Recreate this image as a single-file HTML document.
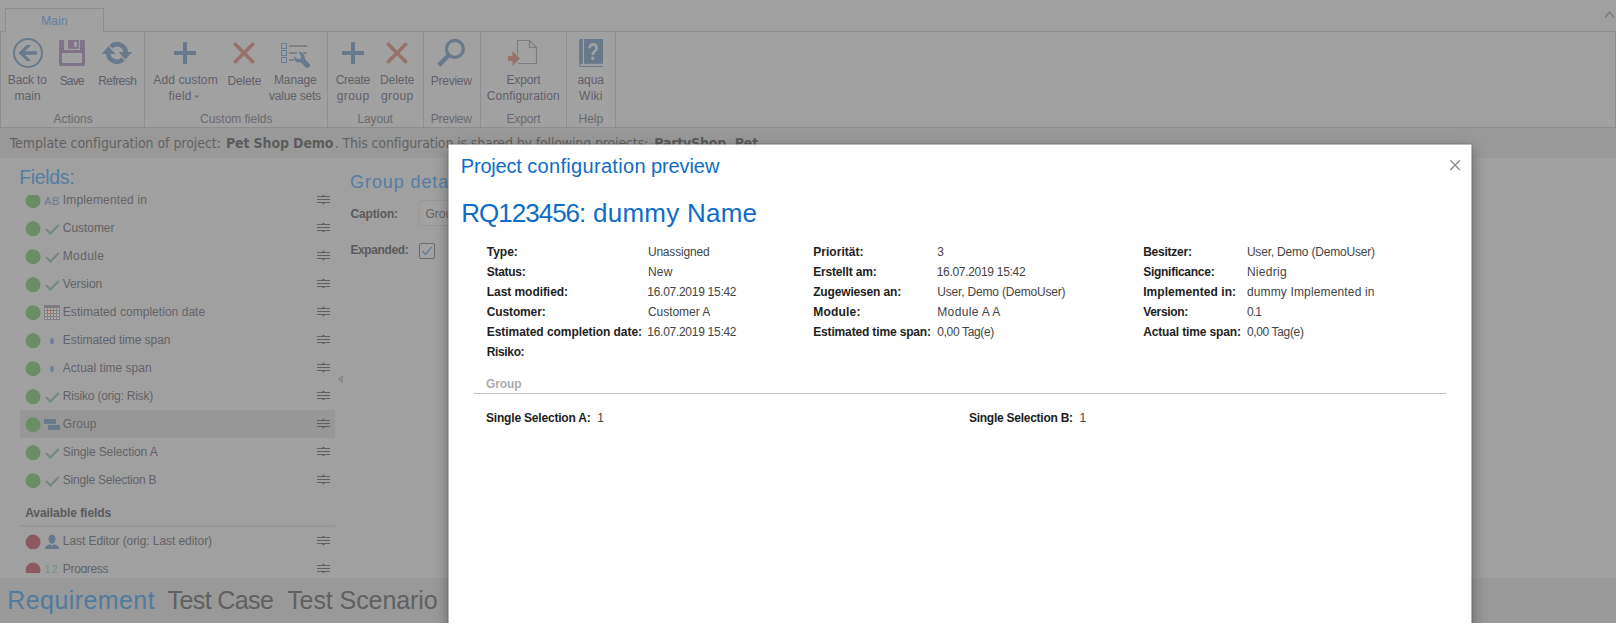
<!DOCTYPE html>
<html lang="en">
<head>
<meta charset="utf-8">
<title>Project configuration preview</title>
<style>
*{box-sizing:border-box;margin:0;padding:0}
html,body{width:1616px;height:623px;overflow:hidden;background:#a0a0a0;font-family:"Liberation Sans",sans-serif;font-size:12px;color:#5e5e62}
#page{position:relative;width:1616px;height:623px;overflow:hidden;background:#a0a0a0}
.a{position:absolute}
.t{position:absolute;white-space:pre}
#ribbon{left:0;top:31px;width:1616px;height:97px;border:1px solid #8d8d8d;background:#a1a1a1}
#tab{left:5px;top:8px;width:99px;height:24px;border:1px solid #8d8d8d;border-bottom:none;background:#a1a1a1}
.sep{top:32px;width:1px;height:95px;background:#8f8f8f}
#info{left:0;top:128px;width:1616px;height:30px;background:#999}
#sel{left:20px;top:410px;width:315px;height:28px;background:#979797}
#avline{left:20px;top:525px;width:315px;height:2px;background:#979797}
#bottom{left:0;top:578px;width:1616px;height:45px;background:#999}
#modal{left:448px;top:144px;width:1023px;height:520px;background:#fff;box-shadow:0 0 0 1px rgba(0,0,0,.15),0 5px 15px rgba(0,0,0,.4);transform:translate(.5px,.5px)}
#gline{left:474px;top:393px;width:972px;height:1px;background:#c3c3c3}
</style>
</head>
<body>
<div id="page">
<div id="ribbon" class="a"></div>
<div id="tab" class="a"></div>
<div class="a sep" style="left:144px"></div>
<div class="a sep" style="left:327px"></div>
<div class="a sep" style="left:423px"></div>
<div class="a sep" style="left:480px"></div>
<div class="a sep" style="left:566px"></div>
<div class="a sep" style="left:615px"></div>
<div id="info" class="a"></div>
<div id="sel" class="a"></div>
<div id="avline" class="a"></div>
<div id="bottom" class="a"></div>
<svg class="a" style="left:0;top:30px" width="640" height="98" viewBox="0 30 640 98" fill="none">
 <!-- back -->
 <circle cx="28" cy="53" r="14" stroke="#69798c" stroke-width="2"/>
 <path d="M18.400 53 L26.800 45 L31.400 45 L25 51.200 L37 51.200 L37 54.800 L25 54.800 L31.400 61 L26.800 61 Z" fill="#69798c"/>
 <!-- save -->
 <path d="M59 41.500 Q59 40 60.500 40 L64.100 40 L64.100 49.900 L79.900 49.900 L79.900 40 L83.500 40 Q85 40 85 41.500 L85 64.500 Q85 66 83.500 66 L60.500 66 Q59 66 59 64.500 Z M62 53 L62 63 L82 63 L82 53 Z" fill="#807289" fill-rule="evenodd"/>
 <path d="M68.100 40 H78.800 V48.800 H68.100 Z M74 42.100 V46.800 H76.900 V42.100 Z" fill="#807289" fill-rule="evenodd"/>
 <!-- refresh -->
 <path d="M110.800 46.800 A8.750 8.750 0 0 1 125.750 53" stroke="#69798c" stroke-width="4.500"/>
 <path d="M123.200 59.200 A8.750 8.750 0 0 1 108.250 53" stroke="#69798c" stroke-width="4.500"/>
 <path d="M101.700 54 L115.400 54 L108.500 46.300 Z" fill="#69798c"/>
 <path d="M118.600 52 L132.300 52 L125.400 59.500 Z" fill="#69798c"/>
 <!-- plus -->
 <path d="M183 42 H187 V51 H196 V55 H187 V64 H183 V55 H174 V51 H183 Z" fill="#69798c"/>
 <!-- delete x -->
 <path d="M234.300 43.300 L253.700 62.700 M253.700 43.300 L234.300 62.700" stroke="#96726a" stroke-width="3.600"/>
 <!-- manage -->
 <g stroke="#687d97" stroke-width="1">
 <rect x="281.500" y="43.500" width="5" height="5"/><rect x="281.500" y="50.500" width="5" height="5"/><rect x="281.500" y="57.500" width="5" height="5"/>
 </g>
 <path d="M289 46 H307 M289 53 H296.800 M303.300 53 H307 M289 60 H293.900" stroke="#818181" stroke-width="2"/>
 <path d="M298.100 52.100 L301.600 52.300 Q303.800 54 304.400 55.500 L304.900 59 L310.100 64.500 Q310.500 65.600 309.800 66.400 L307.700 67.900 Q306.500 68.200 305.700 67.500 L300.800 62.300 L297.800 62.600 Q296 62.200 295.100 60.900 Q293.900 58.500 294 56 L297 58.700 L300 59 L301.400 56.700 L300 54.400 Z" fill="#69798c"/>
 <!-- plus 2 -->
 <path d="M351 42 H355 V51 H364 V55 H355 V64 H351 V55 H342 V51 H351 Z" fill="#69798c"/>
 <path d="M387.300 43.300 L406.700 62.700 M406.700 43.300 L387.300 62.700" stroke="#96726a" stroke-width="3.600"/>
 <!-- preview -->
 <circle cx="454.900" cy="48.900" r="8.450" stroke="#69798c" stroke-width="3.200"/>
 <path d="M449.200 54.600 L438.800 65.300" stroke="#69798c" stroke-width="4.400"/>
 <!-- export -->
 <path d="M517.500 54 V40.500 H529.500 L536.500 47.500 V63.500 H517.500" stroke="#7c7c7c" stroke-width="1.200"/>
 <path d="M529.500 40.500 V47.500 H536.500" stroke="#7c7c7c" stroke-width="1.200"/>
 <path d="M508 56 H512.500 V51 L520 58.500 L512.500 66 V61 H508 Z" fill="#96726a"/>
 <!-- book -->
 <path d="M584.100 39 H603 V63.800 H584.100 Z" fill="#69798c"/>
 <path d="M579.100 40 L580 39 H582.800 V63.800 H580.300 V65.900 H603 V67 H580.200 L579.100 66 Z" fill="#69798c"/>
</svg>
<span class="t" style="left:586.400px;top:39px;width:14px;text-align:center;font-weight:bold;font-size:23px;line-height:26px;color:#a1a1a1;transform:scaleX(.82)">?</span>
<svg class="a" style="left:194px;top:95px" width="6" height="4" viewBox="0 0 6 4"><path d="M0.300 0.500 H5.300 L2.800 3.300 Z" fill="#777"/></svg>
<svg class="a" style="left:1600px;top:6px" width="16" height="16" viewBox="1600 6 16 16"><path d="M1604.900 18.600 V15.900 L1609.500 10.900 L1614.100 15.900 V18.600 L1609.500 13.700 Z" fill="#808080"/></svg>

<svg class="a" style="left:24px;top:191px" width="18" height="18" viewBox="0 0 18 18"><circle cx="9.100" cy="9.7" r="7.450" fill="#6b8c67"/></svg>
<svg class="a" style="left:24px;top:219px" width="18" height="18" viewBox="0 0 18 18"><circle cx="9.100" cy="9.7" r="7.450" fill="#6b8c67"/></svg>
<svg class="a" style="left:24px;top:247px" width="18" height="18" viewBox="0 0 18 18"><circle cx="9.100" cy="9.7" r="7.450" fill="#6b8c67"/></svg>
<svg class="a" style="left:24px;top:275px" width="18" height="18" viewBox="0 0 18 18"><circle cx="9.100" cy="9.7" r="7.450" fill="#6b8c67"/></svg>
<svg class="a" style="left:24px;top:303px" width="18" height="18" viewBox="0 0 18 18"><circle cx="9.100" cy="9.7" r="7.450" fill="#6b8c67"/></svg>
<svg class="a" style="left:24px;top:331px" width="18" height="18" viewBox="0 0 18 18"><circle cx="9.100" cy="9.7" r="7.450" fill="#6b8c67"/></svg>
<svg class="a" style="left:24px;top:359px" width="18" height="18" viewBox="0 0 18 18"><circle cx="9.100" cy="9.7" r="7.450" fill="#6b8c67"/></svg>
<svg class="a" style="left:24px;top:387px" width="18" height="18" viewBox="0 0 18 18"><circle cx="9.100" cy="9.7" r="7.450" fill="#6b8c67"/></svg>
<svg class="a" style="left:24px;top:415px" width="18" height="18" viewBox="0 0 18 18"><circle cx="9.100" cy="9.7" r="7.450" fill="#6b8c67"/></svg>
<svg class="a" style="left:24px;top:443px" width="18" height="18" viewBox="0 0 18 18"><circle cx="9.100" cy="9.7" r="7.450" fill="#6b8c67"/></svg>
<svg class="a" style="left:24px;top:471px" width="18" height="18" viewBox="0 0 18 18"><circle cx="9.100" cy="9.7" r="7.450" fill="#6b8c67"/></svg>
<svg class="a" style="left:24px;top:532px" width="18" height="18" viewBox="0 0 18 18"><circle cx="9.100" cy="9.9" r="7.450" fill="#8d5961"/></svg>
<svg class="a" style="left:24px;top:560px" width="18" height="18" viewBox="0 0 18 18"><circle cx="9.100" cy="9.9" r="7.450" fill="#8d5961"/></svg>
<svg class="a" style="left:317px;top:193px" width="13" height="13" viewBox="0 0 13 13" fill="none"><path d="M0 3.500 H13 M0 6.500 H13 M0 9.500 H13" stroke="#606060" stroke-width="1"/><path d="M5 3 L6.500 1.500 L8 3 Z M5 10 L6.500 11.500 L8 10 Z" fill="#606060"/></svg>
<svg class="a" style="left:317px;top:221px" width="13" height="13" viewBox="0 0 13 13" fill="none"><path d="M0 3.500 H13 M0 6.500 H13 M0 9.500 H13" stroke="#606060" stroke-width="1"/><path d="M5 3 L6.500 1.500 L8 3 Z M5 10 L6.500 11.500 L8 10 Z" fill="#606060"/></svg>
<svg class="a" style="left:317px;top:249px" width="13" height="13" viewBox="0 0 13 13" fill="none"><path d="M0 3.500 H13 M0 6.500 H13 M0 9.500 H13" stroke="#606060" stroke-width="1"/><path d="M5 3 L6.500 1.500 L8 3 Z M5 10 L6.500 11.500 L8 10 Z" fill="#606060"/></svg>
<svg class="a" style="left:317px;top:277px" width="13" height="13" viewBox="0 0 13 13" fill="none"><path d="M0 3.500 H13 M0 6.500 H13 M0 9.500 H13" stroke="#606060" stroke-width="1"/><path d="M5 3 L6.500 1.500 L8 3 Z M5 10 L6.500 11.500 L8 10 Z" fill="#606060"/></svg>
<svg class="a" style="left:317px;top:305px" width="13" height="13" viewBox="0 0 13 13" fill="none"><path d="M0 3.500 H13 M0 6.500 H13 M0 9.500 H13" stroke="#606060" stroke-width="1"/><path d="M5 3 L6.500 1.500 L8 3 Z M5 10 L6.500 11.500 L8 10 Z" fill="#606060"/></svg>
<svg class="a" style="left:317px;top:333px" width="13" height="13" viewBox="0 0 13 13" fill="none"><path d="M0 3.500 H13 M0 6.500 H13 M0 9.500 H13" stroke="#606060" stroke-width="1"/><path d="M5 3 L6.500 1.500 L8 3 Z M5 10 L6.500 11.500 L8 10 Z" fill="#606060"/></svg>
<svg class="a" style="left:317px;top:361px" width="13" height="13" viewBox="0 0 13 13" fill="none"><path d="M0 3.500 H13 M0 6.500 H13 M0 9.500 H13" stroke="#606060" stroke-width="1"/><path d="M5 3 L6.500 1.500 L8 3 Z M5 10 L6.500 11.500 L8 10 Z" fill="#606060"/></svg>
<svg class="a" style="left:317px;top:389px" width="13" height="13" viewBox="0 0 13 13" fill="none"><path d="M0 3.500 H13 M0 6.500 H13 M0 9.500 H13" stroke="#606060" stroke-width="1"/><path d="M5 3 L6.500 1.500 L8 3 Z M5 10 L6.500 11.500 L8 10 Z" fill="#606060"/></svg>
<svg class="a" style="left:317px;top:417px" width="13" height="13" viewBox="0 0 13 13" fill="none"><path d="M0 3.500 H13 M0 6.500 H13 M0 9.500 H13" stroke="#606060" stroke-width="1"/><path d="M5 3 L6.500 1.500 L8 3 Z M5 10 L6.500 11.500 L8 10 Z" fill="#606060"/></svg>
<svg class="a" style="left:317px;top:445px" width="13" height="13" viewBox="0 0 13 13" fill="none"><path d="M0 3.500 H13 M0 6.500 H13 M0 9.500 H13" stroke="#606060" stroke-width="1"/><path d="M5 3 L6.500 1.500 L8 3 Z M5 10 L6.500 11.500 L8 10 Z" fill="#606060"/></svg>
<svg class="a" style="left:317px;top:473px" width="13" height="13" viewBox="0 0 13 13" fill="none"><path d="M0 3.500 H13 M0 6.500 H13 M0 9.500 H13" stroke="#606060" stroke-width="1"/><path d="M5 3 L6.500 1.500 L8 3 Z M5 10 L6.500 11.500 L8 10 Z" fill="#606060"/></svg>
<svg class="a" style="left:317px;top:534px" width="13" height="13" viewBox="0 0 13 13" fill="none"><path d="M0 3.500 H13 M0 6.500 H13 M0 9.500 H13" stroke="#606060" stroke-width="1"/><path d="M5 3 L6.500 1.500 L8 3 Z M5 10 L6.500 11.500 L8 10 Z" fill="#606060"/></svg>
<svg class="a" style="left:317px;top:562px" width="13" height="13" viewBox="0 0 13 13" fill="none"><path d="M0 3.500 H13 M0 6.500 H13 M0 9.500 H13" stroke="#606060" stroke-width="1"/><path d="M5 3 L6.500 1.500 L8 3 Z M5 10 L6.500 11.500 L8 10 Z" fill="#606060"/></svg>
<svg class="a" style="left:45px;top:222px" width="16" height="14" viewBox="0 0 16 14" fill="none"><path d="M1.300 7.200 L5.400 11.600 L13.700 3" stroke="#738a82" stroke-width="2.200"/></svg>
<svg class="a" style="left:45px;top:250px" width="16" height="14" viewBox="0 0 16 14" fill="none"><path d="M1.300 7.200 L5.400 11.600 L13.700 3" stroke="#738a82" stroke-width="2.200"/></svg>
<svg class="a" style="left:45px;top:278px" width="16" height="14" viewBox="0 0 16 14" fill="none"><path d="M1.300 7.200 L5.400 11.600 L13.700 3" stroke="#738a82" stroke-width="2.200"/></svg>
<svg class="a" style="left:45px;top:390px" width="16" height="14" viewBox="0 0 16 14" fill="none"><path d="M1.300 7.200 L5.400 11.600 L13.700 3" stroke="#738a82" stroke-width="2.200"/></svg>
<svg class="a" style="left:45px;top:446px" width="16" height="14" viewBox="0 0 16 14" fill="none"><path d="M1.300 7.200 L5.400 11.600 L13.700 3" stroke="#738a82" stroke-width="2.200"/></svg>
<svg class="a" style="left:45px;top:474px" width="16" height="14" viewBox="0 0 16 14" fill="none"><path d="M1.300 7.200 L5.400 11.600 L13.700 3" stroke="#738a82" stroke-width="2.200"/></svg>
<svg class="a" style="left:44px;top:304px" width="16" height="16" viewBox="0 0 16 16"><rect x="0" y="1" width="16" height="15" fill="#828282"/><rect x="0.500" y="1.500" width="15" height="2" fill="#7a7a7a"/><g fill="#acacac"><rect x="1" y="4" width="2" height="2"/><rect x="4" y="4" width="2" height="2"/><rect x="7" y="4" width="2" height="2"/><rect x="10" y="4" width="2" height="2"/><rect x="13" y="4" width="2" height="2"/><rect x="1" y="7" width="2" height="2"/><rect x="4" y="7" width="2" height="2"/><rect x="7" y="7" width="2" height="2"/><rect x="10" y="7" width="2" height="2"/><rect x="13" y="7" width="2" height="2"/><rect x="1" y="10" width="2" height="2"/><rect x="4" y="10" width="2" height="2"/><rect x="7" y="10" width="2" height="2"/><rect x="10" y="10" width="2" height="2"/><rect x="13" y="10" width="2" height="2"/><rect x="1" y="13" width="2" height="2"/><rect x="4" y="13" width="2" height="2"/><rect x="7" y="13" width="2" height="2"/><rect x="10" y="13" width="2" height="2"/><rect x="13" y="13" width="2" height="2"/></g><rect x="3" y="6" width="4" height="4" fill="#a5675a"/><rect x="4" y="7" width="2" height="2" fill="#b4bec3"/></svg>
<svg class="a" style="left:48px;top:336px" width="8" height="10" viewBox="0 0 8 10"><ellipse cx="4" cy="5" rx="1.900" ry="3.100" fill="#6b7f9c"/></svg>
<svg class="a" style="left:48px;top:364px" width="8" height="10" viewBox="0 0 8 10"><ellipse cx="4" cy="5" rx="1.900" ry="3.100" fill="#6b7f9c"/></svg>
<svg class="a" style="left:44px;top:418px" width="17" height="13" viewBox="0 0 17 13"><rect x="0" y="1" width="12" height="4.900" fill="#69798c"/><rect x="4.100" y="7" width="12" height="4.900" fill="#69798c"/></svg>
<svg class="a" style="left:44px;top:534px" width="16" height="16" viewBox="0 0 16 16"><path d="M8 0.800 C10 0.800 11.300 2.200 11.300 4.300 C11.300 4.800 11.900 4.800 11.700 5.600 C11.600 6.300 11.200 6.300 11.100 6.700 C10.700 8.400 9.500 9.800 8 9.800 C6.500 9.800 5.300 8.400 4.900 6.700 C4.800 6.300 4.400 6.300 4.300 5.600 C4.100 4.800 4.700 4.800 4.700 4.300 C4.700 2.200 6 0.800 8 0.800 Z" fill="#67788c"/><path d="M1 14.900 C1 12 2.800 11.200 5.700 10.200 L8 11.700 L10.300 10.200 C13.200 11.200 15 12 15 14.900 Z" fill="#67788c"/></svg>
<svg class="a" style="left:337px;top:374px" width="7" height="11" viewBox="0 0 7 11"><path d="M6 0.800 V9.800 L0.600 5.300 Z" fill="#8a8a8a"/></svg>
<div class="a" style="left:419px;top:200px;width:60px;height:26px;border:1px solid #989898;border-radius:4px;background:#a2a2a2"></div>
<div class="a" style="left:419px;top:243px;width:16px;height:16px;border:1px solid #6a6a6a;border-radius:2px;background:#a2a2a2"></div>
<svg class="a" style="left:419px;top:243px" width="16" height="16" viewBox="0 0 16 16" fill="none"><path d="M3.500 8.300 L6.600 11.600 L12.700 3.800" stroke="#5f7a9a" stroke-width="1.300"/></svg>

<span class="t" style="left:41.2px;top:12.8px;font-size:12px;line-height:16px;color:#5c7fa3;letter-spacing:0.16px;">Main</span>
<span class="t" style="left:7.8px;top:71.8px;font-size:12px;line-height:16px;color:#615f69;letter-spacing:-0.14px;">Back to</span>
<span class="t" style="left:14.4px;top:87.8px;font-size:12px;line-height:16px;color:#615f69;letter-spacing:0.06px;">main</span>
<span class="t" style="left:59.7px;top:72.8px;font-size:12px;line-height:16px;color:#615f69;letter-spacing:-0.85px;">Save</span>
<span class="t" style="left:98.2px;top:72.8px;font-size:12px;line-height:16px;color:#615f69;letter-spacing:-0.56px;">Refresh</span>
<span class="t" style="left:153.3px;top:71.8px;font-size:12px;line-height:16px;color:#615f69;letter-spacing:0.11px;">Add custom</span>
<span class="t" style="left:168.5px;top:87.8px;font-size:12px;line-height:16px;color:#615f69;letter-spacing:0.25px;">field</span>
<span class="t" style="left:227.4px;top:72.8px;font-size:12px;line-height:16px;color:#615f69;letter-spacing:-0.14px;">Delete</span>
<span class="t" style="left:274.0px;top:71.8px;font-size:12px;line-height:16px;color:#615f69;letter-spacing:-0.13px;">Manage</span>
<span class="t" style="left:269.1px;top:87.8px;font-size:12px;line-height:16px;color:#615f69;letter-spacing:-0.23px;">value sets</span>
<span class="t" style="left:335.8px;top:71.8px;font-size:12px;line-height:16px;color:#615f69;letter-spacing:-0.35px;">Create</span>
<span class="t" style="left:336.8px;top:87.8px;font-size:12px;line-height:16px;color:#615f69;letter-spacing:0.40px;">group</span>
<span class="t" style="left:380.0px;top:71.8px;font-size:12px;line-height:16px;color:#615f69;letter-spacing:-0.06px;">Delete</span>
<span class="t" style="left:381.0px;top:87.8px;font-size:12px;line-height:16px;color:#615f69;letter-spacing:0.40px;">group</span>
<span class="t" style="left:430.8px;top:72.8px;font-size:12px;line-height:16px;color:#615f69;letter-spacing:-0.26px;">Preview</span>
<span class="t" style="left:506.5px;top:71.8px;font-size:12px;line-height:16px;color:#615f69;letter-spacing:-0.14px;">Export</span>
<span class="t" style="left:486.8px;top:87.8px;font-size:12px;line-height:16px;color:#615f69;letter-spacing:0.13px;">Configuration</span>
<span class="t" style="left:577.5px;top:71.8px;font-size:12px;line-height:16px;color:#615f69;letter-spacing:-0.10px;">aqua</span>
<span class="t" style="left:579.1px;top:87.8px;font-size:12px;line-height:16px;color:#615f69;letter-spacing:0.24px;">Wiki</span>
<span class="t" style="left:53.6px;top:110.8px;font-size:12px;line-height:16px;color:#69696f;letter-spacing:-0.03px;">Actions</span>
<span class="t" style="left:200.1px;top:110.8px;font-size:12px;line-height:16px;color:#69696f;letter-spacing:-0.03px;">Custom fields</span>
<span class="t" style="left:357.5px;top:110.8px;font-size:12px;line-height:16px;color:#69696f;letter-spacing:-0.13px;">Layout</span>
<span class="t" style="left:430.8px;top:110.8px;font-size:12px;line-height:16px;color:#69696f;letter-spacing:-0.26px;">Preview</span>
<span class="t" style="left:506.5px;top:110.8px;font-size:12px;line-height:16px;color:#69696f;letter-spacing:-0.14px;">Export</span>
<span class="t" style="left:578.5px;top:110.8px;font-size:12px;line-height:16px;color:#69696f;letter-spacing:-0.03px;">Help</span>
<span class="t" style="left:9.8px;top:134.2px;font-size:14px;line-height:18px;color:#626262;font-family:'DejaVu Sans Condensed','DejaVu Sans','Liberation Sans',sans-serif;letter-spacing:-0.05px;">Template configuration of project:</span>
<span class="t" style="left:225.9px;top:134.2px;font-size:14px;line-height:18px;color:#5c5c5c;font-weight:700;font-family:'DejaVu Sans Condensed','DejaVu Sans','Liberation Sans',sans-serif;letter-spacing:-0.12px;">Pet Shop Demo</span>
<span class="t" style="left:334.8px;top:134.2px;font-size:14px;line-height:18px;color:#626262;font-family:'DejaVu Sans Condensed','DejaVu Sans','Liberation Sans',sans-serif;letter-spacing:-0.14px;">. This configuration is shared by following projects:</span>
<span class="t" style="left:654.3px;top:134.2px;font-size:14px;line-height:18px;color:#5c5c5c;font-weight:700;font-family:'DejaVu Sans Condensed','DejaVu Sans','Liberation Sans',sans-serif;letter-spacing:-0.20px;">PartyShop, Pet</span>
<span class="t" style="left:350.1px;top:170.5px;font-size:18px;line-height:23px;color:#557da3;letter-spacing:0.9px;">Group details</span>
<span class="t" style="left:62.8px;top:191.8px;font-size:12px;line-height:16px;color:#636367;letter-spacing:0.16px;">Implemented in</span>
<span class="t" style="left:62.8px;top:219.8px;font-size:12px;line-height:16px;color:#636367;letter-spacing:-0.05px;">Customer</span>
<span class="t" style="left:62.8px;top:247.8px;font-size:12px;line-height:16px;color:#636367;letter-spacing:0.33px;">Module</span>
<span class="t" style="left:62.8px;top:275.8px;font-size:12px;line-height:16px;color:#636367;letter-spacing:-0.11px;">Version</span>
<span class="t" style="left:62.8px;top:303.8px;font-size:12px;line-height:16px;color:#636367;letter-spacing:0.04px;">Estimated completion date</span>
<span class="t" style="left:62.8px;top:331.8px;font-size:12px;line-height:16px;color:#636367;letter-spacing:-0.06px;">Estimated time span</span>
<span class="t" style="left:62.8px;top:359.8px;font-size:12px;line-height:16px;color:#636367;letter-spacing:0.01px;">Actual time span</span>
<span class="t" style="left:62.8px;top:387.8px;font-size:12px;line-height:16px;color:#636367;letter-spacing:-0.20px;">Risiko (orig: Risk)</span>
<span class="t" style="left:62.8px;top:415.8px;font-size:12px;line-height:16px;color:#636367;letter-spacing:0.09px;">Group</span>
<span class="t" style="left:62.8px;top:443.8px;font-size:12px;line-height:16px;color:#636367;letter-spacing:-0.11px;">Single Selection A</span>
<span class="t" style="left:62.8px;top:471.8px;font-size:12px;line-height:16px;color:#636367;letter-spacing:-0.21px;">Single Selection B</span>
<span class="t" style="left:25.2px;top:504.8px;font-size:12px;line-height:16px;color:#5a5a5c;font-weight:700;letter-spacing:-0.06px;">Available fields</span>
<span class="t" style="left:62.8px;top:532.8px;font-size:12px;line-height:16px;color:#636367;letter-spacing:-0.07px;">Last Editor (orig: Last editor)</span>
<span class="t" style="left:62.8px;top:560.8px;font-size:12px;line-height:16px;color:#636367;letter-spacing:-0.33px;">Progress</span>
<span class="t" style="left:44.3px;top:193.7px;font-size:11px;line-height:14px;color:#697a91;letter-spacing:0.43px;">AB</span>
<span class="t" style="left:44.6px;top:562.2px;font-size:11px;line-height:14px;color:#75918a;letter-spacing:1.00px;">12</span>
<span class="t" style="left:350.4px;top:205.8px;font-size:12px;line-height:16px;color:#5a5a5c;font-weight:700;letter-spacing:-0.14px;">Caption:</span>
<span class="t" style="left:350.4px;top:241.8px;font-size:12px;line-height:16px;color:#5a5a5c;font-weight:700;letter-spacing:-0.38px;">Expanded:</span>
<span class="t" style="left:425.4px;top:205.8px;font-size:12px;line-height:16px;color:#626262;">Group</span>
<span class="t" style="left:7.3px;top:584.3px;font-size:25px;line-height:32px;color:#527a9e;letter-spacing:0.42px;">Requirement</span>
<span class="t" style="left:167.5px;top:584.3px;font-size:25px;line-height:32px;color:#606060;letter-spacing:-0.59px;">Test Case</span>
<span class="t" style="left:287.2px;top:584.3px;font-size:25px;line-height:32px;color:#606060;letter-spacing:-0.08px;">Test Scenario</span>
<div style="position:absolute;left:0;top:573px;width:340px;height:5px;background:#a0a0a0"></div>
<div style="position:absolute;left:0;top:158px;width:340px;height:37px;background:#a0a0a0"></div>
<span class="t" style="left:19.2px;top:164.7px;font-size:19.5px;line-height:25px;color:#557da3;letter-spacing:-0.34px;">Fields:</span>
<div id="modal" class="a"></div>
<div id="gline" class="a"></div>
<svg class="a" style="left:1448px;top:158px" width="14" height="14" viewBox="0 0 14 14"><path d="M2.300 2.300 L11.900 11.900 M11.900 2.300 L2.300 11.900" stroke="#8c8c8c" stroke-width="1.350" fill="none"/></svg>
<span class="t" style="left:460.8px;top:153.1px;font-size:20px;line-height:26px;color:#0f6cc6;letter-spacing:-0.21px;">Project</span>
<span class="t" style="left:527.3px;top:153.1px;font-size:20px;line-height:26px;color:#0f6cc6;letter-spacing:0.31px;">configuration</span>
<span class="t" style="left:650.9px;top:153.1px;font-size:20px;line-height:26px;color:#0f6cc6;letter-spacing:-0.08px;">preview</span>
<span class="t" style="left:461.3px;top:196.0px;font-size:26px;line-height:34px;color:#0f6cc6;letter-spacing:-1.00px;">RQ123456:</span>
<span class="t" style="left:593.0px;top:196.0px;font-size:26px;line-height:34px;color:#0f6cc6;letter-spacing:0.25px;">dummy Name</span>
<span class="t" style="left:486.8px;top:243.8px;font-size:12px;line-height:16px;color:#1e1e1e;font-weight:700;letter-spacing:-0.03px;">Type:</span>
<span class="t" style="left:486.8px;top:263.8px;font-size:12px;line-height:16px;color:#1e1e1e;font-weight:700;letter-spacing:-0.30px;">Status:</span>
<span class="t" style="left:486.8px;top:283.8px;font-size:12px;line-height:16px;color:#1e1e1e;font-weight:700;letter-spacing:-0.06px;">Last modified:</span>
<span class="t" style="left:486.8px;top:303.8px;font-size:12px;line-height:16px;color:#1e1e1e;font-weight:700;letter-spacing:-0.14px;">Customer:</span>
<span class="t" style="left:486.8px;top:323.8px;font-size:12px;line-height:16px;color:#1e1e1e;font-weight:700;letter-spacing:-0.06px;">Estimated completion date:</span>
<span class="t" style="left:486.8px;top:343.8px;font-size:12px;line-height:16px;color:#1e1e1e;font-weight:700;letter-spacing:-0.37px;">Risiko:</span>
<span class="t" style="left:647.9px;top:243.8px;font-size:12px;line-height:16px;color:#444444;letter-spacing:-0.18px;">Unassigned</span>
<span class="t" style="left:647.9px;top:263.8px;font-size:12px;line-height:16px;color:#444444;letter-spacing:0.29px;">New</span>
<span class="t" style="left:647.3px;top:283.8px;font-size:12px;line-height:16px;color:#444444;letter-spacing:-0.28px;">16.07.2019 15:42</span>
<span class="t" style="left:647.9px;top:303.8px;font-size:12px;line-height:16px;color:#444444;letter-spacing:-0.03px;">Customer A</span>
<span class="t" style="left:647.3px;top:323.8px;font-size:12px;line-height:16px;color:#444444;letter-spacing:-0.28px;">16.07.2019 15:42</span>
<span class="t" style="left:813.2px;top:243.8px;font-size:12px;line-height:16px;color:#1e1e1e;font-weight:700;letter-spacing:0.04px;">Priorität:</span>
<span class="t" style="left:813.2px;top:263.8px;font-size:12px;line-height:16px;color:#1e1e1e;font-weight:700;letter-spacing:-0.17px;">Erstellt am:</span>
<span class="t" style="left:813.2px;top:283.8px;font-size:12px;line-height:16px;color:#1e1e1e;font-weight:700;letter-spacing:-0.16px;">Zugewiesen an:</span>
<span class="t" style="left:813.2px;top:303.8px;font-size:12px;line-height:16px;color:#1e1e1e;font-weight:700;letter-spacing:0.22px;">Module:</span>
<span class="t" style="left:813.2px;top:323.8px;font-size:12px;line-height:16px;color:#1e1e1e;font-weight:700;letter-spacing:-0.15px;">Estimated time span:</span>
<span class="t" style="left:937.3px;top:243.8px;font-size:12px;line-height:16px;color:#444444;">3</span>
<span class="t" style="left:936.7px;top:263.8px;font-size:12px;line-height:16px;color:#444444;letter-spacing:-0.30px;">16.07.2019 15:42</span>
<span class="t" style="left:937.3px;top:283.8px;font-size:12px;line-height:16px;color:#444444;letter-spacing:-0.19px;">User, Demo (DemoUser)</span>
<span class="t" style="left:937.3px;top:303.8px;font-size:12px;line-height:16px;color:#444444;letter-spacing:0.33px;">Module A A</span>
<span class="t" style="left:937.3px;top:323.8px;font-size:12px;line-height:16px;color:#444444;letter-spacing:-0.35px;">0,00 Tag(e)</span>
<span class="t" style="left:1143.2px;top:243.8px;font-size:12px;line-height:16px;color:#1e1e1e;font-weight:700;letter-spacing:-0.24px;">Besitzer:</span>
<span class="t" style="left:1143.2px;top:263.8px;font-size:12px;line-height:16px;color:#1e1e1e;font-weight:700;letter-spacing:-0.27px;">Significance:</span>
<span class="t" style="left:1143.2px;top:283.8px;font-size:12px;line-height:16px;color:#1e1e1e;font-weight:700;letter-spacing:0.06px;">Implemented in:</span>
<span class="t" style="left:1143.2px;top:303.8px;font-size:12px;line-height:16px;color:#1e1e1e;font-weight:700;letter-spacing:-0.31px;">Version:</span>
<span class="t" style="left:1143.2px;top:323.8px;font-size:12px;line-height:16px;color:#1e1e1e;font-weight:700;letter-spacing:-0.14px;">Actual time span:</span>
<span class="t" style="left:1246.9px;top:243.8px;font-size:12px;line-height:16px;color:#444444;letter-spacing:-0.19px;">User, Demo (DemoUser)</span>
<span class="t" style="left:1246.9px;top:263.8px;font-size:12px;line-height:16px;color:#444444;letter-spacing:0.28px;">Niedrig</span>
<span class="t" style="left:1246.9px;top:283.8px;font-size:12px;line-height:16px;color:#444444;letter-spacing:0.15px;">dummy Implemented in</span>
<span class="t" style="left:1246.9px;top:303.8px;font-size:12px;line-height:16px;color:#444444;letter-spacing:-0.79px;">0.1</span>
<span class="t" style="left:1246.9px;top:323.8px;font-size:12px;line-height:16px;color:#444444;letter-spacing:-0.35px;">0,00 Tag(e)</span>
<span class="t" style="left:486.0px;top:375.8px;font-size:12px;line-height:16px;color:#adadad;font-weight:700;letter-spacing:-0.12px;">Group</span>
<span class="t" style="left:486.0px;top:409.8px;font-size:12px;line-height:16px;color:#1e1e1e;font-weight:700;letter-spacing:-0.19px;">Single Selection A:</span>
<span class="t" style="left:597.3px;top:409.8px;font-size:12px;line-height:16px;color:#444444;">1</span>
<span class="t" style="left:968.9px;top:409.8px;font-size:12px;line-height:16px;color:#1e1e1e;font-weight:700;letter-spacing:-0.25px;">Single Selection B:</span>
<span class="t" style="left:1079.5px;top:409.8px;font-size:12px;line-height:16px;color:#444444;">1</span>
</div>
</body>
</html>
